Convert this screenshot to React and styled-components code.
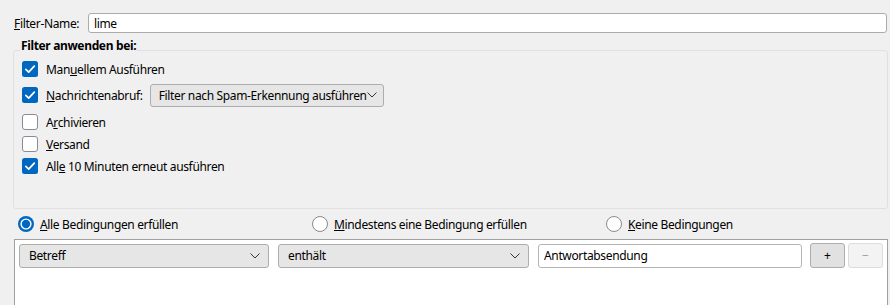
import React from 'react';
import styled, {createGlobalStyle} from 'styled-components'

const GlobalStyle = createGlobalStyle`
    body{
        margin:0;
        background:#f0f0f0;
        font-family:"Noto Sans", "Liberation Sans", sans-serif;
        font-size:12px;
        letter-spacing:-0.35px;
        color:#000;
    }
`

const Check = ({checked}) => (
    <CheckBox viewBox="0 0 16 16">
        {checked
            ? <>
                <rect x="0" y="0" width="16" height="16" rx="2.5" fill="#0067c0"/>
                <path d="M3.8 8.4 L6.7 11.2 L12.3 5.2" stroke="#fff" strokeWidth="1.7" fill="none" strokeLinecap="round" strokeLinejoin="round"/>
              </>
            : <rect x="0.5" y="0.5" width="15" height="15" rx="2.5" fill="#fff" stroke="#8b8993"/>
        }
    </CheckBox>
)

const Radio = ({checked}) => (
    <RadioIcon viewBox="0 0 16 16">
        {checked
            ? <>
                <circle cx="8" cy="8" r="8" fill="#0067c0"/>
                <circle cx="8" cy="8" r="5.6" fill="#fff"/>
                <circle cx="8" cy="8" r="4.2" fill="#0067c0"/>
              </>
            : <circle cx="8" cy="8" r="7.5" fill="#fff" stroke="#8b8993"/>
        }
    </RadioIcon>
)

const Chevron = () => (
    <ChevronIcon viewBox="0 0 10 6">
        <path d="M0.5 0.5 L5 5 L9.5 0.5" stroke="#333" strokeWidth="1" fill="none"/>
    </ChevronIcon>
)

const Key = ({children}) => <u>{children}</u>

const App = () => {
    return(<>
        <GlobalStyle/>
        <Page>
            <NameRow>
                <Label><Key>F</Key>ilter-Name:</Label>
                <NameInput defaultValue="lime"/>
            </NameRow>

            <Group>
                <Legend>Filter anwenden bei:</Legend>
                <CheckList>
                    <CheckRow>
                        <Check checked/>
                        <span>Man<Key>u</Key>ellem Ausführen</span>
                    </CheckRow>
                    <CheckRow tall>
                        <Check checked/>
                        <span><Key>N</Key>achrichtenabruf:</span>
                        <SpamSelect>
                            Filter nach Spam-Erkennung ausführen
                            <Chevron/>
                        </SpamSelect>
                    </CheckRow>
                    <CheckRow>
                        <Check/>
                        <span>A<Key>r</Key>chivieren</span>
                    </CheckRow>
                    <CheckRow>
                        <Check/>
                        <span><Key>V</Key>ersand</span>
                    </CheckRow>
                    <CheckRow>
                        <Check checked/>
                        <span>All<Key>e</Key> 10 Minuten erneut ausführen</span>
                    </CheckRow>
                </CheckList>
            </Group>

            <RadioRow>
                <RadioItem><Radio checked/><span><Key>A</Key>lle Bedingungen erfüllen</span></RadioItem>
                <RadioItem><Radio/><span><Key>M</Key>indestens eine Bedingung erfüllen</span></RadioItem>
                <RadioItem><Radio/><span><Key>K</Key>eine Bedingungen</span></RadioItem>
            </RadioRow>

            <RuleList>
                <RuleRow>
                    <RuleSelect w={250}>Betreff<Chevron/></RuleSelect>
                    <RuleSelect w={251}>enthält<Chevron/></RuleSelect>
                    <RuleInput defaultValue="Antwortabsendung"/>
                    <SmallBtn>+</SmallBtn>
                    <SmallBtn disabled>−</SmallBtn>
                </RuleRow>
            </RuleList>
        </Page>
    </>)
}

const Page = styled.div`
    width:890px;
    height:305px;
    overflow:hidden;
    display:flex;
    flex-direction:column;
`
const NameRow = styled.div`
    display:flex;
    align-items:center;
    padding:13px 0 0 14px;
    gap:6px;
`
const Label = styled.span`
    width:68px;
    white-space:nowrap;
`
const NameInput = styled.input`
    box-sizing:border-box;
    width:799px;
    height:20px;
    border:1px solid #acacac;
    border-radius:3px;
    background:#fff;
    font:inherit;
    letter-spacing:inherit;
    padding:0 5px;
    outline:none;
`
const Group = styled.fieldset`
    box-sizing:border-box;
    margin:6px 0 0 13px;
    width:875px;
    border:1px solid #e0e0e0;
    border-radius:3px;
    padding:0 0 31px 6px;
`
const Legend = styled.legend`
    font-weight:bold;
    line-height:14px;
    padding:0 1px 8px;
`
const CheckList = styled.div`
    display:flex;
    flex-direction:column;
    margin:-3px 0 0 2px;
`
const CheckRow = styled.div`
    display:flex;
    align-items:center;
    height:${p => p.tall ? 28 : 22}px;
    margin:${p => p.tall ? '1px 0 2px' : '0'};
    span{ margin-left:8px; white-space:nowrap; }
`
const CheckBox = styled.svg`
    width:16px;
    height:16px;
    flex:none;
`
const SpamSelect = styled.div`
    box-sizing:border-box;
    display:flex;
    align-items:center;
    justify-content:space-between;
    margin-left:7px;
    width:234px;
    height:23px;
    padding:0 6px 0 8px;
    background:#e6e6e6;
    border:1px solid #adadad;
    border-radius:3px;
    white-space:nowrap;
`
const ChevronIcon = styled.svg`
    width:10px;
    height:6px;
    flex:none;
`
const RadioRow = styled.div`
    display:grid;
    grid-template-columns:294px 294px 1fr;
    align-items:center;
    height:28px;
    padding:1px 0 0 18px;
`
const RadioItem = styled.div`
    display:flex;
    align-items:center;
    gap:6px;
    white-space:nowrap;
`
const RadioIcon = styled.svg`
    width:16px;
    height:16px;
    flex:none;
`
const RuleList = styled.div`
    box-sizing:border-box;
    margin:1px 0 0 14px;
    width:874px;
    flex:1;
    background:#fff;
    border:1px solid #a0a0a0;
    border-bottom:none;
    padding:3px 0 0 4px;
`
const RuleRow = styled.div`
    display:flex;
    align-items:center;
`
const RuleSelect = styled.div`
    box-sizing:border-box;
    display:flex;
    align-items:center;
    justify-content:space-between;
    width:${p => p.w}px;
    height:24px;
    margin-right:9px;
    padding:0 8px 0 9px;
    background:#e6e6e6;
    border:1px solid #adadad;
    border-radius:3px;
`
const RuleInput = styled.input`
    box-sizing:border-box;
    width:264px;
    height:24px;
    border:1px solid #b4b4b4;
    border-radius:3px;
    font:inherit;
    letter-spacing:inherit;
    padding:0 5px;
    outline:none;
    margin-right:8px;
`
const SmallBtn = styled.button`
    box-sizing:border-box;
    width:35px;
    height:25px;
    margin-right:3px;
    border:1px solid ${p => p.disabled ? '#dcdcdc' : '#adadad'};
    border-radius:3px;
    background:${p => p.disabled ? '#f3f3f3' : '#e1e1e1'};
    color:${p => p.disabled ? '#a0a0a0' : '#000'};
    font:inherit;
    padding:0;
`

export default App;
